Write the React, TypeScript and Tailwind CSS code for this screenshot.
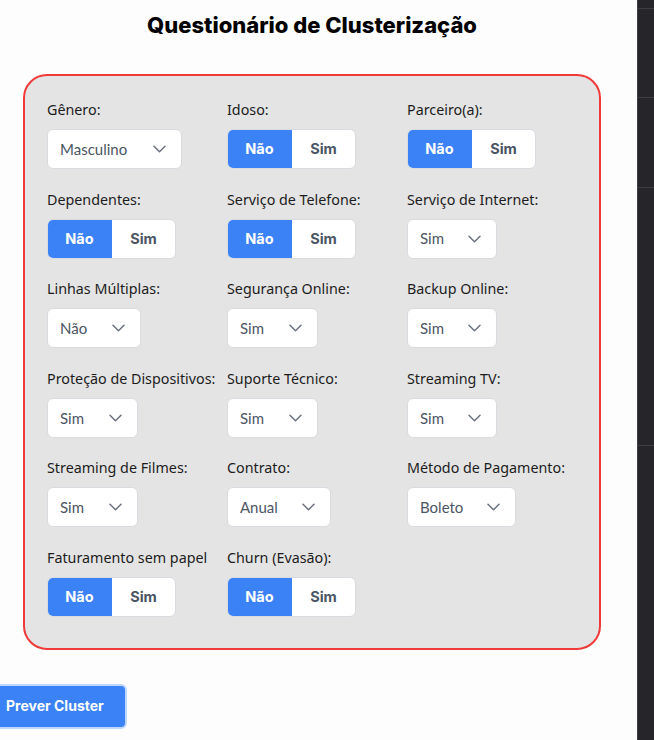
import React from "react";

type Field =
  | { label: string; kind: "toggle" }
  | { label: string; kind: "select"; value: string; width: string };

const fields: Field[] = [
  { label: "Gênero:", kind: "select", value: "Masculino", width: "w-[135px]" },
  { label: "Idoso:", kind: "toggle" },
  { label: "Parceiro(a):", kind: "toggle" },
  { label: "Dependentes:", kind: "toggle" },
  { label: "Serviço de Telefone:", kind: "toggle" },
  { label: "Serviço de Internet:", kind: "select", value: "Sim", width: "w-[90px]" },
  { label: "Linhas Múltiplas:", kind: "select", value: "Não", width: "w-[94px]" },
  { label: "Segurança Online:", kind: "select", value: "Sim", width: "w-[91px]" },
  { label: "Backup Online:", kind: "select", value: "Sim", width: "w-[90px]" },
  { label: "Proteção de Dispositivos:", kind: "select", value: "Sim", width: "w-[91px]" },
  { label: "Suporte Técnico:", kind: "select", value: "Sim", width: "w-[91px]" },
  { label: "Streaming TV:", kind: "select", value: "Sim", width: "w-[90px]" },
  { label: "Streaming de Filmes:", kind: "select", value: "Sim", width: "w-[91px]" },
  { label: "Contrato:", kind: "select", value: "Anual", width: "w-[104px]" },
  { label: "Método de Pagamento:", kind: "select", value: "Boleto", width: "w-[109px]" },
  { label: "Faturamento sem papel", kind: "toggle" },
  { label: "Churn (Evasão):", kind: "toggle" },
];

function Chevron() {
  return (
    <svg width="13" height="8" viewBox="0 0 13 8" fill="none" className="shrink-0">
      <path d="M1 1.2l5.5 5.5L12 1.2" stroke="#6b7280" strokeWidth="1.5" strokeLinecap="round" strokeLinejoin="round" />
    </svg>
  );
}

function FakeSelect({ value, width }: { value: string; width: string }) {
  return (
    <div
      className={`${width} h-10 flex items-center justify-between pl-3 pr-[15px] bg-white border border-[#d9dbe0] rounded-md text-[15px] text-[#4b5563] [font-family:Lato,'Liberation_Sans',sans-serif]`}
    >
      <span>{value}</span>
      <Chevron />
    </div>
  );
}

function Toggle() {
  return (
    <div className="w-[129px] h-10 flex rounded-md overflow-hidden border border-[#d9dbe0] bg-white text-[14.5px] font-bold [font-family:Inter,'Liberation_Sans',sans-serif]">
      <div className="w-[65px] -m-px mr-0 flex items-center justify-center bg-[#3b82f6] text-white">Não</div>
      <div className="flex-1 flex items-center justify-center text-[#4b5563]">Sim</div>
    </div>
  );
}

export default function App() {
  return (
    <div className="h-[740px] flex bg-[#fdfdfd] overflow-hidden">
      <main className="flex-1 min-w-0">
        <div className="ml-[23px] w-[578px]">
          <h1 className="mt-[11px] text-center text-[22px] leading-7 font-extrabold text-black [font-family:Inter,'Liberation_Sans',sans-serif]">
            Questionário de Clusterização
          </h1>
          <div className="mt-[35px] border-2 border-[#f03a3a] rounded-3xl bg-[#e4e4e4] pl-[22px] pt-[23px] pb-[31px]">
            <div className="grid grid-cols-[180px_180px_180px] gap-y-[19.6px]">
              {fields.map((f) => (
                <div key={f.label}>
                  <div className="text-[14.3px] leading-[21px] mb-[9px] text-[#1c1c1c] whitespace-nowrap [font-family:'Noto_Sans',sans-serif]">
                    {f.label}
                  </div>
                  {f.kind === "toggle" ? <Toggle /> : <FakeSelect value={f.value} width={f.width} />}
                </div>
              ))}
            </div>
          </div>
        </div>
        <button className="mt-[34px] -ml-[16px] h-[45px] pl-5 pr-[21px] rounded-md bg-[#3b82f6] border-2 border-[#bfd7fd] text-white text-sm font-bold [font-family:Inter,'Liberation_Sans',sans-serif]">
          Prever Cluster
        </button>
      </main>
      <aside className="w-[17px] shrink-0 bg-[#25252a] border-l border-[#3d3d42] flex flex-col">
        <div className="h-[9px] border-b border-[#3d3d42]" />
        <div className="h-[89px] border-b border-[#3d3d42]" />
        <div className="h-[90px] border-b border-[#3d3d42]" />
        <div className="h-[258px] border-b border-[#3d3d42]" />
        <div className="flex-1" />
      </aside>
    </div>
  );
}
